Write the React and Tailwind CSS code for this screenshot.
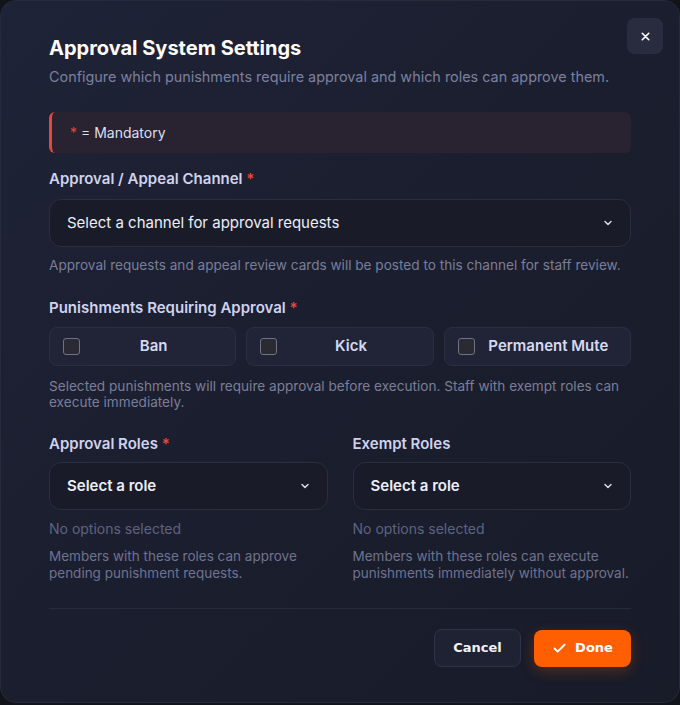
import { useState } from "react"

function Chevron() {
  return (
    <svg width="12" height="12" viewBox="0 0 24 24" fill="none" stroke="currentColor" strokeWidth="3" strokeLinecap="round" strokeLinejoin="round">
      <path d="m6 9 6 6 6-6" />
    </svg>
  )
}

function Select({ placeholder, bold }) {
  return (
    <div className="h-[48px] flex items-center justify-between pl-[17px] pr-[16px] rounded-xl bg-[#191b28] border border-[#2b2e41]">
      <span className={`text-[15px] text-[#eceef8] ${bold ? "font-semibold" : ""}`}>{placeholder}</span>
      <span className="text-[#d8dbea]"><Chevron /></span>
    </div>
  )
}

function Label({ children, required }) {
  return (
    <div className="text-[15px] leading-[20px] font-semibold text-[#cfd2ef]">
      {children}
      {required && <span className="text-[#e5483a]"> *</span>}
    </div>
  )
}

export default function App() {
  const [checked, setChecked] = useState({})
  const punishments = ["Ban", "Kick", "Permanent Mute"]

  return (
    <div className="h-[705px] bg-[#12141c] font-['Inter',sans-serif]">
      <div className="relative h-[703px] rounded-2xl border border-[#262a3b] bg-gradient-to-br from-[#1f2337] via-[#1b1e2e] to-[#181b28] px-12 pt-[33px]">
        <button className="absolute top-[17px] right-[16px] w-9 h-9 rounded-lg bg-[#292c3f] flex items-center justify-center text-white">
          <svg width="13" height="13" viewBox="0 0 24 24" fill="none" stroke="currentColor" strokeWidth="3" strokeLinecap="round">
            <path d="M18 6 6 18M6 6l12 12" />
          </svg>
        </button>

        <h2 className="text-[20px] leading-[28px] font-bold text-white">Approval System Settings</h2>
        <p className="mt-[5px] text-[14.4px] leading-[20px] text-[#7c809f]">
          Configure which punishments require approval and which roles can approve them.
        </p>

        <div className="mt-[25px] h-[41px] flex items-center pl-[18px] rounded-md border-l-[3px] border-[#e5483a] bg-[#292231]">
          <span className="text-[14px] text-[#dcdef2]"><span className="text-[#e5483a]">*</span> = Mandatory</span>
        </div>

        <div className="mt-[16px]">
          <Label required>Approval / Appeal Channel</Label>
        </div>
        <div className="mt-[10px]">
          <Select placeholder="Select a channel for approval requests" />
        </div>
        <p className="mt-[8px] text-[13.6px] leading-[20px] text-[#7a7e99]">
          Approval requests and appeal review cards will be posted to this channel for staff review.
        </p>

        <div className="mt-[23px]">
          <Label required>Punishments Requiring Approval</Label>
        </div>
        <div className="mt-[9px] grid grid-cols-3 gap-[10px]">
          {punishments.map((p) => (
            <button
              key={p}
              onClick={() => setChecked({ ...checked, [p]: !checked[p] })}
              className="h-[39px] flex items-center pl-[13px] pr-[8px] rounded-lg bg-[#212436] border border-[#2b2e41]"
            >
              <span className={`w-[17px] h-[17px] rounded-[3px] border border-[#6f7184] shrink-0 ${checked[p] ? "bg-[#ff5f00]" : "bg-[#2a2a33]"}`} />
              <span className="flex-1 text-center text-[15px] font-semibold text-[#d6d9f2]">{p}</span>
            </button>
          ))}
        </div>
        <p className="mt-[12px] text-[13.6px] leading-[16px] text-[#7a7e99]">
          Selected punishments will require approval before execution. Staff with exempt roles can execute immediately.
        </p>

        <div className="mt-[24px] grid grid-cols-2 gap-[25px]">
          {[
            { label: "Approval Roles", required: true, help: "Members with these roles can approve pending punishment requests." },
            { label: "Exempt Roles", required: false, help: "Members with these roles can execute punishments immediately without approval." },
          ].map((col) => (
            <div key={col.label}>
              <Label required={col.required}>{col.label}</Label>
              <div className="mt-[8px]">
                <Select placeholder="Select a role" bold />
              </div>
              <p className="mt-[9px] text-[14px] leading-[20px] text-[#5f6380]">No options selected</p>
              <p className="mt-[9px] text-[13.5px] leading-[17px] text-[#6f7390]">{col.help}</p>
            </div>
          ))}
        </div>

        <div className="mt-[26px] h-px bg-[#272a3a]" />

        <div className="mt-[20px] flex justify-end items-center gap-[13px]">
          <button className="w-[87px] h-[38px] rounded-lg bg-[#1f2233] border border-[#303347] text-[13px] font-bold text-[#f1f2f8] font-['DejaVu_Sans',sans-serif]">
            Cancel
          </button>
          <button className="w-[97px] h-[37px] rounded-lg bg-[#ff5f00] shadow-[0_4px_14px_rgba(255,95,0,0.25)] flex items-center justify-center gap-[8px] text-[13px] font-bold text-white font-['DejaVu_Sans',sans-serif]">
            <svg width="15" height="15" viewBox="0 0 24 24" fill="none" stroke="currentColor" strokeWidth="3" strokeLinecap="round" strokeLinejoin="round">
              <path d="M20 6 9 17l-5-5" />
            </svg>
            Done
          </button>
        </div>
      </div>
    </div>
  )
}
